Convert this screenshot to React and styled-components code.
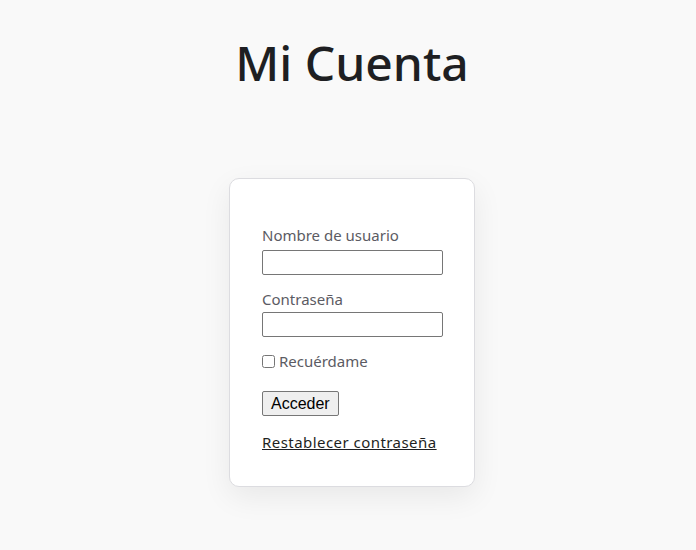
import React from 'react'
import styled, { createGlobalStyle } from 'styled-components'

const GlobalStyle = createGlobalStyle`
  html, body {
    margin: 0;
    padding: 0;
    background: #f9f9f9;
    font-family: "Noto Sans", "Lato", sans-serif;
  }
`

const Page = styled.main`
  display: flex;
  flex-direction: column;
  align-items: center;
  min-height: 550px;
  padding: 32px 0 0 8px;
  box-sizing: border-box;
`

const Title = styled.h1`
  margin: 0;
  font-size: 48px;
  font-weight: 500;
  color: #1e1f22;
  line-height: 62px;
`

const Card = styled.section`
  margin-top: 84px;
  width: 246px;
  box-sizing: border-box;
  padding: 47px 32px 34px;
  background: #fff;
  border: 1px solid #dcdce0;
  border-radius: 10px;
  box-shadow: 0 10px 30px rgba(0, 0, 0, 0.07);
`

const Form = styled.form`
  display: flex;
  flex-direction: column;
  align-items: flex-start;
`

const Label = styled.label`
  font-size: 15px;
  color: #5b5b63;
  line-height: 18px;
  margin-bottom: ${p => p.$gap || 4}px;
`

const Input = styled.input`
  width: 181px;
  height: 25px;
  box-sizing: border-box;
  border: 1px solid #767676;
  border-radius: 2px;
  margin: 0 0 15px;
`

const CheckRow = styled.label`
  display: flex;
  align-items: center;
  gap: 4px;
  font-size: 15px;
  line-height: 18px;
  color: #5b5b63;
  margin-bottom: 21px;
  input {
    margin: 0;
    width: 13px;
    height: 13px;
  }
`

const Button = styled.button`
  font-family: "Liberation Sans", Arial, sans-serif;
  font-size: 16px;
  height: 25px;
  padding: 0 8px;
  background: #efefef;
  border: 1px solid #767676;
  border-radius: 2px;
  color: #000;
  margin-bottom: 16px;
`

const Link = styled.a`
  font-size: 15px;
  line-height: 20px;
  letter-spacing: 0.45px;
  color: #1e1f22;
  text-decoration: underline;
`

export default function App() {
  return (
    <>
      <GlobalStyle />
      <Page>
        <Title>Mi Cuenta</Title>
        <Card>
          <Form onSubmit={e => e.preventDefault()}>
            <Label htmlFor="user" $gap={6}>Nombre de usuario</Label>
            <Input id="user" type="text" />
            <Label htmlFor="pass">Contraseña</Label>
            <Input id="pass" type="password" />
            <CheckRow>
              <input type="checkbox" />
              Recuérdame
            </CheckRow>
            <Button type="submit">Acceder</Button>
            <Link href="#">Restablecer contraseña</Link>
          </Form>
        </Card>
      </Page>
    </>
  )
}
